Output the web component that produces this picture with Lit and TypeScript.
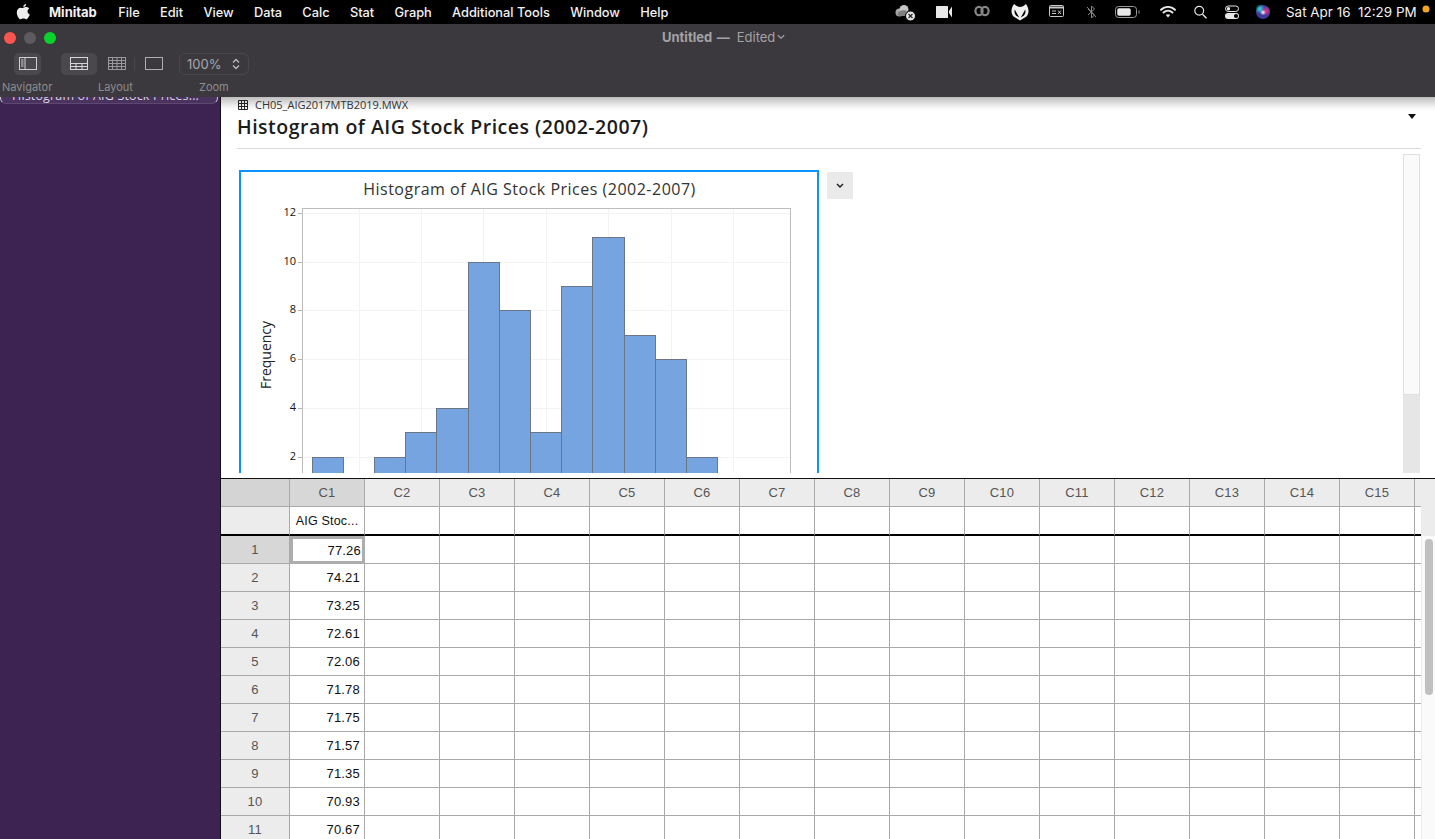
import { LitElement, html, css, svg } from "lit";
import { customElement } from "lit/decorators.js";

const BARS: [number, number, number][] = [
  [312, 343, 2], [374, 405, 2], [405, 436, 3], [436, 468, 4], [468, 499, 10], [499, 530, 8],
  [530, 561, 3], [561, 592, 9], [592, 623.9, 11], [623.9, 655, 7], [655, 686, 6], [686, 717, 2],
];
const VALUES = ["77.26", "74.21", "73.25", "72.61", "72.06", "71.78", "71.75", "71.57", "71.35", "70.93", "70.67"];
const COLS = Array.from({ length: 15 }, (_, i) => `C${i + 1}`);
const MENUS = ["File", "Edit", "View", "Data", "Calc", "Stat", "Graph", "Additional Tools", "Window", "Help"];

@customElement("app-root")
export class AppRoot extends LitElement {
  static styles = css`
    :host { display: flex; flex-direction: column; width: 1435px; height: 839px; overflow: hidden; font-family: "Inter", "Liberation Sans", sans-serif; background: #fff; }
    .menubar { height: 24px; flex: none; background: #000; color: #f2f2f2; display: flex; align-items: center; font-size: 12.8px; font-weight: 500; padding-left: 16px; box-sizing: border-box; }
    .apple { width: 14px; height: 16px; margin-right: 19px; flex: none; }
    .app { font-weight: 700; font-size: 13px; margin-right: 21.4px; }
    .menu { margin-right: 20.25px; white-space: nowrap; }
    .status { margin-left: auto; display: flex; align-items: center; height: 24px; width: 540px; flex: none; }
    .status svg { flex: none; display: block; }
    .m19 { margin-left: 19px; } .m21 { margin-left: 21px; } .m20 { margin-left: 20px; } .m22 { margin-left: 22px; }
    .m18 { margin-left: 18px; } .m17 { margin-left: 17px; } .m7 { margin-left: 5px; }
    .clock { margin-left: 16px; white-space: nowrap; font-weight: 400; font-size: 13.45px; }
    .toolbar { height: 73px; flex: none; background: #3b393e; color: #98979a; display: flex; flex-direction: column; }
    .row1 { display: grid; grid-template-columns: 662px auto 1fr; height: 29px; flex: none; }
    .lights { display: flex; gap: 8px; padding: 8px 0 0 4px; }
    .light { width: 12px; height: 12px; border-radius: 50%; }
    .red { background: #fc5550; } .gray { background: #5d5b60; } .green { background: #0ad12c; }
    .title { padding-top: 5px; line-height: 16px; font-size: 13px; color: #a3a2a5; display: flex; align-items: center; height: 16px; white-space: nowrap; }
    .title b { font-weight: 700; margin-right: 7px; word-spacing: 1.500px; }
    .title svg { margin-left: 2px; }
    .tools { display: flex; align-items: center; height: 22px; flex: none; }
    .tool { height: 22px; border-radius: 5px; display: flex; align-items: center; justify-content: center; }
    .tool.on { background: #4a484d; }
    .nav { width: 27px; margin-left: 14px; }
    .lay { width: 36px; margin-left: 20px; }
    .grid-tool { width: 20px; margin-left: 10px; }
    .sep { width: 1px; height: 14px; background: #4c4a4f; margin-left: 7px; }
    .single { width: 20px; margin-left: 9px; }
    .zoom { width: 70px; height: 22px; margin-left: 15px; border: 1px solid #4a484d; border-radius: 6px; box-sizing: border-box; display: flex; align-items: center; font-size: 13px; color: #a8a7aa; padding-left: 7px; gap: 11px; }
    .labels { display: grid; grid-template-columns: 96px 101px auto; padding-left: 2px; margin-top: 6px; font-size: 11px; line-height: 13px; color: #8d8c8f; }
    .body { flex: 1; display: flex; min-height: 0; }
    .side { width: 220px; flex: none; background: #3c2352; overflow: hidden; border-right: 1px solid #111; box-sizing: content-box; }
    .pill { margin-top: -12px; width: 218px; height: 19px; box-sizing: border-box; border: 1px solid #cfcad4; border-bottom-color: #5d4872; border-radius: 6px; background: #4b3360; color: #d9d4de; font-family: "Open Sans", sans-serif; font-size: 12.5px; letter-spacing: .16px; line-height: 19px; padding-left: 11px; white-space: nowrap; overflow: hidden; }
    .main { flex: 1; display: flex; flex-direction: column; min-width: 0; }
    .report { height: 376px; flex: none; overflow: hidden; background: linear-gradient(#bdbdbd, #f4f4f4 10px, #fff 14px); font-family: "Open Sans", sans-serif; padding-left: 16px; box-sizing: border-box; display: flex; flex-direction: column; }
    .file { margin: 1px 0 0 1px; height: 14px; display: flex; align-items: center; gap: 7px; font-size: 11px; line-height: 14px; color: #333; flex: none; white-space: nowrap; }
    .hrow { margin-top: 2px; width: 1179px; display: flex; flex: none; }
    .h { font-size: 19.5px; letter-spacing: .5px; font-weight: 600; line-height: 26px; color: #1c1c1c; white-space: nowrap; }
    .caret { margin-left: auto; flex: none; }
    .rule { margin-top: 8px; width: 1184px; height: 1px; background: #dcdcdc; flex: none; }
    .content { flex: 1; min-height: 0; margin-top: 5px; width: 1183px; display: flex; align-items: flex-start; }
    .vs { margin-left: auto; width: 17px; align-self: stretch; background: #e6e6e6; flex: none; }
    .vs i { display: block; height: 241px; box-sizing: border-box; background: #fafafa; border: 1px solid #e0e0e0; }
    .chartbox { margin: 16px 0 0 2px; width: 580px; height: 320px; box-sizing: border-box; border: 2px solid #0c93fb; background: #fff; flex: none; }
    .more { margin: 18px 0 0 8px; width: 26px; height: 27px; background: #eaeaea; display: flex; align-items: center; justify-content: center; flex: none; }
    .chart { display: block; }
    .chart text { font-family: "Open Sans", sans-serif; }
    .split { height: 6px; flex: none; background: #fff; border-bottom: 1px solid #111; box-sizing: border-box; }
    .sheet { flex: 1; display: flex; min-height: 0; overflow: hidden; background: #fff; }
    .table { display: grid; grid-template-columns: 69px repeat(15, 75px) 6px; grid-template-rows: 28px 29px; grid-auto-rows: 28px; align-content: start; font-family: "Liberation Sans", Arial, sans-serif; font-size: 13px; letter-spacing: .2px; color: #111; flex: none; width: 1200px; }
    .c { box-sizing: border-box; border-right: 1px solid #a9a9a9; border-bottom: 1px solid #a9a9a9; display: flex; align-items: center; justify-content: center; overflow: hidden; white-space: nowrap; }
    .hd { background: #ececec; color: #555; }
    .hd.sel { background: #d7d7d7; }
    .corner { background: #d4d4d4; }
    .name { color: #111; font-size: 12.5px; }
    .thick { border-bottom: 2px solid #000; }
    .num { justify-content: flex-end; padding-right: 4px; }
    .cur { border: 3px solid #adadad; padding-right: 1px; }
    .tail { border-right: 0; }
    .scroll { flex: 1; background: #fafafa; border-left: 1px solid #ececec; box-sizing: border-box; display: flex; flex-direction: column; }
    .scrolltop { height: 57px; background: #ececec; margin-left: -1px; flex: none; }
    .thumb { margin: 3px 0 0 3px; width: 8px; height: 156px; border-radius: 4px; background: #c0c0c0; flex: none; }
  `;

  private icons() {
    const s = "#e8e8e8";
    return html`
      <svg width="22" height="24" viewBox="0 0 22 24"><circle cx="4.500" cy="12.500" r="4" fill="#a8a8a8"/><circle cx="9" cy="9.500" r="4.500" fill="#c6c6c6"/><path d="M2 14c2-4 7-5 13-2v4H4z" fill="#7f7f7f"/><circle cx="15.500" cy="16" r="5" fill="#e4e4e4" stroke="#000"/><path d="M13.500 14l4 4m0-4l-4 4" stroke="#222" stroke-width="1.100"/></svg>
      <svg class="m19" width="17" height="24" viewBox="0 0 17 24"><rect x="0" y="6" width="12" height="12" rx=".5" fill="${s}"/><path d="M13 11l3-4.500v11L13 13z" fill="${s}"/></svg>
      <svg class="m21" width="16" height="24" viewBox="0 0 16 24"><ellipse cx="5" cy="11" rx="3.600" ry="4.200" fill="none" stroke="#868686" stroke-width="2.200"/><ellipse cx="11" cy="11" rx="3.600" ry="4.200" fill="none" stroke="#868686" stroke-width="2.200"/></svg>
      <svg class="m21" width="18" height="24" viewBox="0 0 18 24"><path d="M3 4C0 8-.5 13 2.500 16.500L9 20.500l6.500-4C18.500 13 18 8 15 4c-2 1.800-3.800 3-6 3S5 5.800 3 4z" fill="#f0f0f0"/><path d="M3.800 9.500c-.6 2.500-.2 4.800 1.500 6.300l2.900 1.800zM14.200 9.500c.6 2.500.2 4.800-1.500 6.300l-2.900 1.800z" fill="#000"/></svg>
      <svg class="m20" width="15" height="24" viewBox="0 0 15 24"><rect x=".5" y="5.500" width="14" height="11" rx="1" fill="none" stroke="#c8c8c8"/><path d="M.5 7.500h14" stroke="#c8c8c8" stroke-width="2"/><path d="M3 11h4M3 13.500h4" stroke="#c8c8c8"/><path d="M9 10.500l3 3.500m0-3.500L9 14" stroke="#c8c8c8"/></svg>
      <svg class="m22" width="11" height="24" viewBox="0 0 11 24"><path d="M2 9l6.500 6L5.500 18V6l3 3L2 15M1 7l9 10" fill="none" stroke="#8a8a8a"/></svg>
      <svg class="m18" width="25" height="24" viewBox="0 0 25 24"><rect x=".5" y="6.500" width="21" height="11" rx="3" fill="none" stroke="#9a9a9a"/><rect x="3" y="9" width="12" height="6" rx="1" fill="${s}" stroke="${s}" stroke-width="1.500"/><path d="M24 10.500v3" stroke="#9a9a9a"/></svg>
      <svg class="m20" width="16" height="24" viewBox="0 0 16 24"><path d="M1 9.800c4-3.900 10-3.900 14 0M3.500 12.500c2.700-2.500 6.300-2.500 9 0" fill="none" stroke="${s}" stroke-width="1.900" stroke-linecap="round"/><path d="M5.800 15c1.300-1.100 3.100-1.100 4.400 0L8 17.500z" fill="${s}"/></svg>
      <svg class="m18" width="13" height="24" viewBox="0 0 13 24"><circle cx="5.200" cy="10.800" r="4.400" fill="none" stroke="${s}" stroke-width="1.200"/><path d="M8.500 14.200l4 4" stroke="${s}" stroke-width="1.400"/></svg>
      <svg class="m18" width="14" height="24" viewBox="0 0 14 24"><rect x=".5" y="6" width="13" height="5.500" rx="2.750" fill="none" stroke="${s}"/><circle cx="3.500" cy="8.750" r="1.700" fill="${s}"/><rect x="0" y="13" width="14" height="6" rx="3" fill="${s}"/><circle cx="11" cy="16" r="2.100" fill="#000"/></svg>
      <svg class="m17" width="14" height="24" viewBox="0 0 14 24"><defs><radialGradient id="sa"><stop offset="0" stop-color="#2fe0d8"/><stop offset="1" stop-color="#2fe0d8" stop-opacity="0"/></radialGradient><radialGradient id="sb"><stop offset="0" stop-color="#f0308e"/><stop offset="1" stop-color="#f0308e" stop-opacity="0"/></radialGradient><radialGradient id="sc"><stop offset="0" stop-color="#fff"/><stop offset="1" stop-color="#fff" stop-opacity="0"/></radialGradient></defs><circle cx="7" cy="12" r="7" fill="#3d3a9c"/><circle cx="4" cy="9" r="5" fill="url(#sa)"/><circle cx="10" cy="11" r="5" fill="url(#sb)"/><circle cx="7" cy="12.500" r="3" fill="url(#sc)"/></svg>
      <span class="clock">Sat Apr 16&nbsp; 12:29 PM</span>
      <svg class="m7" width="8" height="24" viewBox="0 0 8 24"><circle cx="4" cy="9" r="3.500" fill="#f6a623"/></svg>
    `;
  }

  private chart() {
    const y = (v: number) => Math.round(505.5 - v * 24.4);
    return html`<svg class="chart" width="576" height="316" viewBox="241 172 576 316" shape-rendering="crispEdges">
      ${[421, 359, 483, 546, 608, 671, 733].map(x => svg`<line x1="${x}" x2="${x}" y1="209" y2="504" stroke="#f3f3f3"/>`)}
      ${[12, 10, 8, 6, 4, 2].map(v => svg`<line x1="303" x2="790" y1="${y(v)}" y2="${y(v)}" stroke="#f3f3f3"/>
        <line x1="298" x2="302" y1="${y(v)}" y2="${y(v)}" stroke="#b5b5b5"/>
        <text x="296" y="${y(v) + 3}" text-anchor="end" font-size="11" fill="#111" shape-rendering="auto">${v}</text>`)}
      <rect x="302.500" y="208.500" width="488" height="310" fill="none" stroke="#bdbdbd"/>
      ${BARS.map(([a, b, v]) => svg`<rect x="${a + .5}" y="${y(v) + .5}" width="${b - a}" height="${510 - y(v)}" fill="#76a4e0" stroke="#6a7686"/>`)}
      <text x="529.500" y="194.500" text-anchor="middle" font-size="16" font-weight="500" fill="#333" letter-spacing=".5" shape-rendering="auto">Histogram of AIG Stock Prices (2002-2007)</text>
      <text transform="translate(271 355) rotate(-90)" text-anchor="middle" font-size="14" font-weight="500" fill="#222" shape-rendering="auto">Frequency</text>
    </svg>`;
  }

  render() {
    return html`
      <div class="menubar">
        <svg class="apple" viewBox="0 0 14 16"><path d="M10.200 0c.1 1.300-1.200 3-2.900 2.900C7.100 1.500 8.700.1 10.200 0zM7.300 3.800c.8 0 1.700-.7 3.100-.7 1 0 2.100.5 2.800 1.500-2.500 1.500-2 4.900.6 5.900-.6 1.700-2.100 4.800-3.700 4.800-1 0-1.400-.7-2.700-.7s-1.800.7-2.700.7C2.900 15.300.8 11.600.8 8.500c0-3.100 2-4.800 3.900-4.800 1.100 0 2 .8 2.600.1z" fill="#eee"/></svg>
        <span class="app">Minitab</span>
        ${MENUS.map(m => html`<span class="menu">${m}</span>`)}
        <div class="status">${this.icons()}</div>
      </div>
      <div class="toolbar">
        <div class="row1">
          <div class="lights"><i class="light red"></i><i class="light gray"></i><i class="light green"></i></div>
          <div class="title"><b>Untitled —</b>Edited<svg width="8" height="6" viewBox="0 0 8 6"><path d="M.8 1.200L4 4.200l3.200-3" fill="none" stroke="#a3a2a5" stroke-width="1.200"/></svg></div>
        </div>
        <div class="tools">
          <div class="tool on nav"><svg width="18" height="14" viewBox="0 0 18 14"><rect x=".5" y=".5" width="17" height="12" fill="none" stroke="#cfcfd0"/><path d="M6 .5v12" stroke="#cfcfd0"/><path d="M2 3h2.500M2 5h2.500M2 7h2.500M2 9h2.500" stroke="#cfcfd0"/></svg></div>
          <div class="tool on lay"><svg width="18" height="14" viewBox="0 0 18 14"><rect x=".5" y=".5" width="17" height="12" fill="none" stroke="#d6d6d7"/><path d="M.5 6.500h17M.5 9.500h17M6 6.500v6M12 6.500v6" stroke="#d6d6d7"/></svg></div>
          <div class="tool grid-tool"><svg width="18" height="14" viewBox="0 0 18 14"><rect x=".5" y=".5" width="17" height="12" fill="none" stroke="#99989b"/><path d="M.5 3.500h17M.5 6.500h17M.5 9.500h17M4.500 .5v12M9 .5v12M13.500 .5v12" stroke="#99989b"/></svg></div>
          <div class="sep"></div>
          <div class="tool single"><svg width="18" height="14" viewBox="0 0 18 14"><rect x=".5" y=".5" width="17" height="12" fill="none" stroke="#aeadb0"/></svg></div>
          <div class="zoom">100%<svg width="8" height="12" viewBox="0 0 8 12"><path d="M1 4.500l3-3 3 3M1 7.500l3 3 3-3" fill="none" stroke="#bbb" stroke-width="1.300"/></svg></div>
        </div>
        <div class="labels"><span>Navigator</span><span>Layout</span><span>Zoom</span></div>
      </div>
      <div class="body">
        <div class="side"><div class="pill">Histogram of AIG Stock Prices...</div></div>
        <div class="main">
          <div class="report">
            <div class="file"><svg width="10" height="10" viewBox="0 0 10 10"><path d="M.5 .5h9v9h-9zM.5 3.500h9M.5 6.500h9M3.500 .5v9M6.500 .5v9" fill="none" stroke="#222"/></svg>CH05_AIG2017MTB2019.MWX</div>
            <div class="hrow">
              <div class="h">Histogram of AIG Stock Prices (2002-2007)</div>
              <svg class="caret" width="8" height="5" viewBox="0 0 8 5"><path d="M0 0h8L4 5z" fill="#111"/></svg>
            </div>
            <div class="rule"></div>
            <div class="content">
              <div class="chartbox">${this.chart()}</div>
              <div class="more"><svg width="8" height="6" viewBox="0 0 8 6"><path d="M1 1l3 3 3-3" fill="none" stroke="#222" stroke-width="1.500"/></svg></div>
              <div class="vs"><i></i></div>
            </div>
          </div>
          <div class="split"></div>
          <div class="sheet">
            <div class="table">
              <div class="c corner"></div>
              ${COLS.map((c, i) => html`<div class="c hd ${i === 0 ? "sel" : ""}">${c}</div>`)}<div class="c hd tail"></div>
              <div class="c hd thick"></div>
              ${COLS.map((_, i) => html`<div class="c thick name">${i === 0 ? "AIG Stoc..." : ""}</div>`)}<div class="c thick tail"></div>
              ${VALUES.map((v, r) => html`
                <div class="c hd ${r === 0 ? "sel" : ""}">${r + 1}</div>
                ${COLS.map((_, i) => html`<div class="c num ${r === 0 && i === 0 ? "cur" : ""}">${i === 0 ? v : ""}</div>`)}<div class="c tail"></div>`)}
            </div>
            <div class="scroll"><div class="scrolltop"></div><div class="thumb"></div></div>
          </div>
        </div>
      </div>
    `;
  }
}
